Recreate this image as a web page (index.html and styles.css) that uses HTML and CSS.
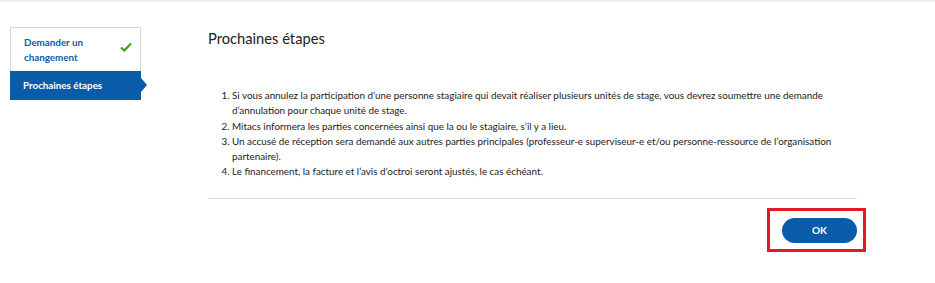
FILE: index.html
```html
<!DOCTYPE html>
<html>

<head>
    <title>Prochaines étapes</title>
    <meta charset="utf-8">
    <link rel="stylesheet" href="styles.css">
</head>

<body>
    <div class="page">
        <!-- Steps of the request -->
        <div class="steps">
            <div class="step done">
                <span>Demander un changement</span>
                <svg class="check" width="12" height="10" viewBox="0 0 12 10">
                    <path d="M1 5.5 L4.3 8.5 L11 1.5" fill="none" stroke="#4a9a1c" stroke-width="2.2" />
                </svg>
            </div>
            <div class="step active">
                <span>Prochaines étapes</span>
            </div>
        </div>

        <div class="content">
            <h2>Prochaines étapes</h2>
            <ol>
                <li>Si vous annulez la participation d’une personne stagiaire qui devait réaliser plusieurs unités de stage, vous devrez soumettre une demande d’annulation pour chaque unité de stage.</li>
                <li>Mitacs informera les parties concernées ainsi que la ou le stagiaire, s’il y a lieu.</li>
                <li>Un accusé de réception sera demandé aux autres parties principales (professeur-e superviseur-e et/ou personne-ressource de l’organisation partenaire).</li>
                <li>Le financement, la facture et l’avis d’octroi seront ajustés, le cas échéant.</li>
            </ol>
            <div class="actions">
                <div class="highlight">
                    <button class="ok">OK</button>
                </div>
            </div>
        </div>
    </div>
</body>

</html>
```

FILE: styles.css
```css
body {
    margin: 0;
    font-family: Lato, "Liberation Sans", sans-serif;
    color: #222;
    background-color: #fff;
}

.page {
    border-top: 2px solid #eeeeee;
    display: flex;
    align-items: flex-start;
    height: 281px;
}

.steps {
    width: 131px;
    margin-left: 10px;
    margin-top: 25px;
    border: 1px solid #d6d6d6;
    border-bottom: none;
    box-sizing: border-box;
}

.step {
    display: flex;
    align-items: center;
    justify-content: space-between;
    font-size: 9.8px;
    font-weight: bold;
    line-height: 15px;
    color: #0b5ea9;
}

.step span {
    width: 80px;
}

.done {
    padding: 7px 8px 6px 13px;
}

.check {
    margin-top: -6px;
}

.active {
    position: relative;
    background-color: #0a5ca8;
    color: #fff;
    padding: 7px 8px 7px 13px;
    margin: 0 -1px;
}

.active span {
    width: auto;
}

.active::after {
    content: "";
    position: absolute;
    right: -6px;
    top: 7px;
    border-top: 7px solid transparent;
    border-bottom: 7px solid transparent;
    border-left: 6px solid #0a5ca8;
}

.content {
    width: 649px;
    margin-left: 67px;
    padding-top: 26px;
}

h2 {
    margin: 0;
    font-size: 14.7px;
    font-weight: normal;
    line-height: 20px;
    color: #222;
}

ol {
    margin: 40px 0 0 0;
    padding: 0 0 18px 24px;
    border-bottom: 1px solid #dddddd;
    font-size: 9.85px;
    line-height: 15.3px;
}

.actions {
    display: flex;
    justify-content: flex-end;
    margin-right: -9px;
    margin-top: 9px;
}

.highlight {
    border: 3px solid #e51a22;
    padding: 7px 6px 6px 12px;
}

.ok {
    display: block;
    width: 75px;
    height: 25px;
    border: none;
    border-radius: 13px;
    background-color: #0a5ca8;
    color: #fff;
    font-family: Lato, "Liberation Sans", sans-serif;
    font-size: 10px;
    font-weight: bold;
}
```
